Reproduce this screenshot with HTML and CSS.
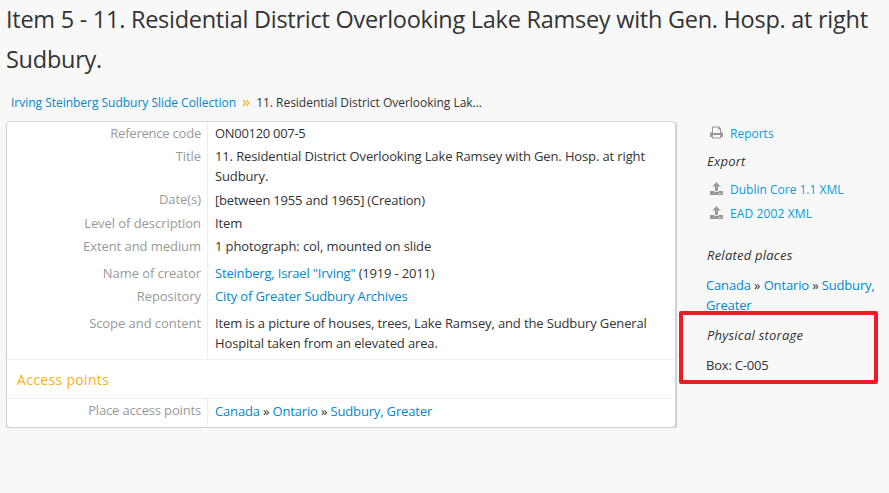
FILE: index.html
```html
<!DOCTYPE html>
<html lang="en">
<head>
<meta charset="utf-8">
<title>Residential District Overlooking Lake Ramsey</title>
<link rel="stylesheet" href="styles.css">
</head>
<body>
<h1>Item 5 - 11. Residential District Overlooking Lake Ramsey with Gen. Hosp. at right Sudbury.</h1>
<div class="layout">
<main>
<nav class="breadcrumb"><a href="#">Irving Steinberg Sudbury Slide Collection</a><svg class="sep" viewBox="0 0 8 8"><path d="M1 1l2.600 3L1 7M4.300 1l2.600 3-2.600 3"/></svg><span>11. Residential District Overlooking Lak...</span></nav>
<section class="card">
<div class="field code"><h3>Reference code</h3><p>ON00120 007-5</p></div>
<div class="field title"><h3>Title</h3><p>11. Residential District Overlooking Lake Ramsey with Gen. Hosp. at right Sudbury.</p></div>
<div class="field dates"><h3>Date(s)</h3><p>[between 1955 and 1965] (Creation)</p></div>
<div class="field level"><h3>Level of description</h3><p>Item</p></div>
<div class="field extent"><h3>Extent and medium</h3><p>1 photograph: col, mounted on slide</p></div>
<div class="field creator"><h3>Name of creator</h3><p><a href="#">Steinberg, Israel "Irving"</a> (1919 - 2011)</p></div>
<div class="field repository"><h3>Repository</h3><p><a href="#">City of Greater Sudbury Archives</a></p></div>
<div class="field scope"><h3>Scope and content</h3><p>Item is a picture of houses, trees, Lake Ramsey, and the Sudbury General Hospital taken from an elevated area.</p></div>
<h2>Access points</h2>
<div class="field places"><h3>Place access points</h3><p><a href="#">Canada</a> » <a href="#">Ontario</a> » <a href="#">Sudbury, Greater</a></p></div>
</section>
</main>
<aside>
<a class="action" href="#"><svg viewBox="0 0 13 13"><path fill-rule="evenodd" d="M2 .5h7l2 2V6q2 0 2 2v3h-2v1.500H2V11H0V8q0-2 2-2zM3 1.500V7h7V3.500H8v-2zM3 9v2.500h7V9z"/></svg>Reports</a>
<h4 class="export-title">Export</h4>
<a class="action" href="#"><svg viewBox="0 0 13 13"><path fill-rule="evenodd" d="M6.500 0l4 4.500H8V9H5V4.500H2.500zM0 9h4.300q.3 1 1.200 1h2q.9 0 1.200-1H13v4H0zM9 11v1h1v-1zM11 11v1h1v-1z"/></svg>Dublin Core 1.1 XML</a>
<a class="action second" href="#"><svg viewBox="0 0 13 13"><path fill-rule="evenodd" d="M6.500 0l4 4.500H8V9H5V4.500H2.500zM0 9h4.300q.3 1 1.200 1h2q.9 0 1.200-1H13v4H0zM9 11v1h1v-1zM11 11v1h1v-1z"/></svg>EAD 2002 XML</a>
<h4 class="related-title">Related places</h4>
<p class="related"><a href="#">Canada</a> » <a href="#">Ontario</a> » <a href="#">Sudbury, Greater</a></p>
<div class="storage"><h4>Physical storage</h4><p>Box: C-005</p></div>
</aside>
</div>
</body>
</html>
```
FILE: styles.css
```css
* { box-sizing: border-box; }
body { margin: 0; background: #f8f8f8; color: #333; font: 13px/20px "Open Sans", sans-serif; }
h1, h2, h3, h4, p { margin: 0; font-weight: 400; }
h1 { font-size: 23.5px; line-height: 40px; letter-spacing: -0.265px; padding: 0 6px; height: 93px; margin-top: -1px; }
a { color: #08c; text-decoration: none; }
.layout { display: flex; }
main { width: 676px; padding-left: 6px; }
.breadcrumb { display: flex; align-items: center; height: 20px; padding-left: 5px; padding-top: 1px; font-size: 12px; letter-spacing: -0.02px; }
.sep { width: 8px; height: 8px; margin: 1px 6px 0; fill: none; stroke: #fbb72b; stroke-width: 1.3; }
.card { margin-top: 9px; height: 307px; background: #fff; border: 1px solid #d4d4d4; border-radius: 4px; box-shadow: 0 1px 1px #ccc, 1px 1px 1px #ccc; overflow: hidden; }
.field { display: grid; grid-template-columns: 201px 1fr; min-height: 23px; }
.field h3 { font-size: 13px; line-height: 20px; color: #999; text-align: right; letter-spacing: -0.06px; padding: 1px 6px 0 0; border-right: 1px solid #eee; }
.field p { padding: 1px 18px 0 7px; letter-spacing: -0.13px; }
.code h3 { letter-spacing: -0.22px; }
.field.code p { letter-spacing: -0.3px; }
.title { min-height: 43px; }
.dates { min-height: 24px; }
.field.dates p { padding-top: 2px; letter-spacing: -0.2px; }
.extent { min-height: 27px; }
.field.extent p { letter-spacing: -0.1px; }
.field.creator p { letter-spacing: -0.18px; }
.repository { min-height: 27px; }
.scope { min-height: 47px; }
h2 { height: 40px; border: solid #eee; border-width: 1px 0; padding-left: 10px; color: #fbb010; font-size: 14px; letter-spacing: 0.33px; line-height: 40px; }
.places { height: 29px; }
.places h3 { letter-spacing: -0.16px; }
.field.places p { padding-top: 2px; letter-spacing: -0.16px; }
aside { width: 213px; padding: 31px 0 0 30px; }
.action { display: flex; align-items: center; height: 20px; padding: 1px 0 0 4px; font-size: 12px; color: #0b9bdc; }
.action svg { width: 13px; height: 13px; fill: #999; margin: -2px 7px 0 0; }
.second { margin-top: 4px; letter-spacing: 0.12px; }
h4 { font-size: 13px; font-style: italic; letter-spacing: 0.23px; padding-left: 1px; }
.export-title { margin: 8px 0; }
.related-title { margin-top: 22px; }
.related { margin-top: 10px; padding-right: 5px; letter-spacing: -0.15px; }
.storage { width: 199px; height: 73px; margin: -4px 0 0 -27px; padding: 10px 0 0 23px; border: 4px solid #ed1c24; border-radius: 2px; }
.storage p { margin-top: 10px; letter-spacing: -0.2px; }
```
